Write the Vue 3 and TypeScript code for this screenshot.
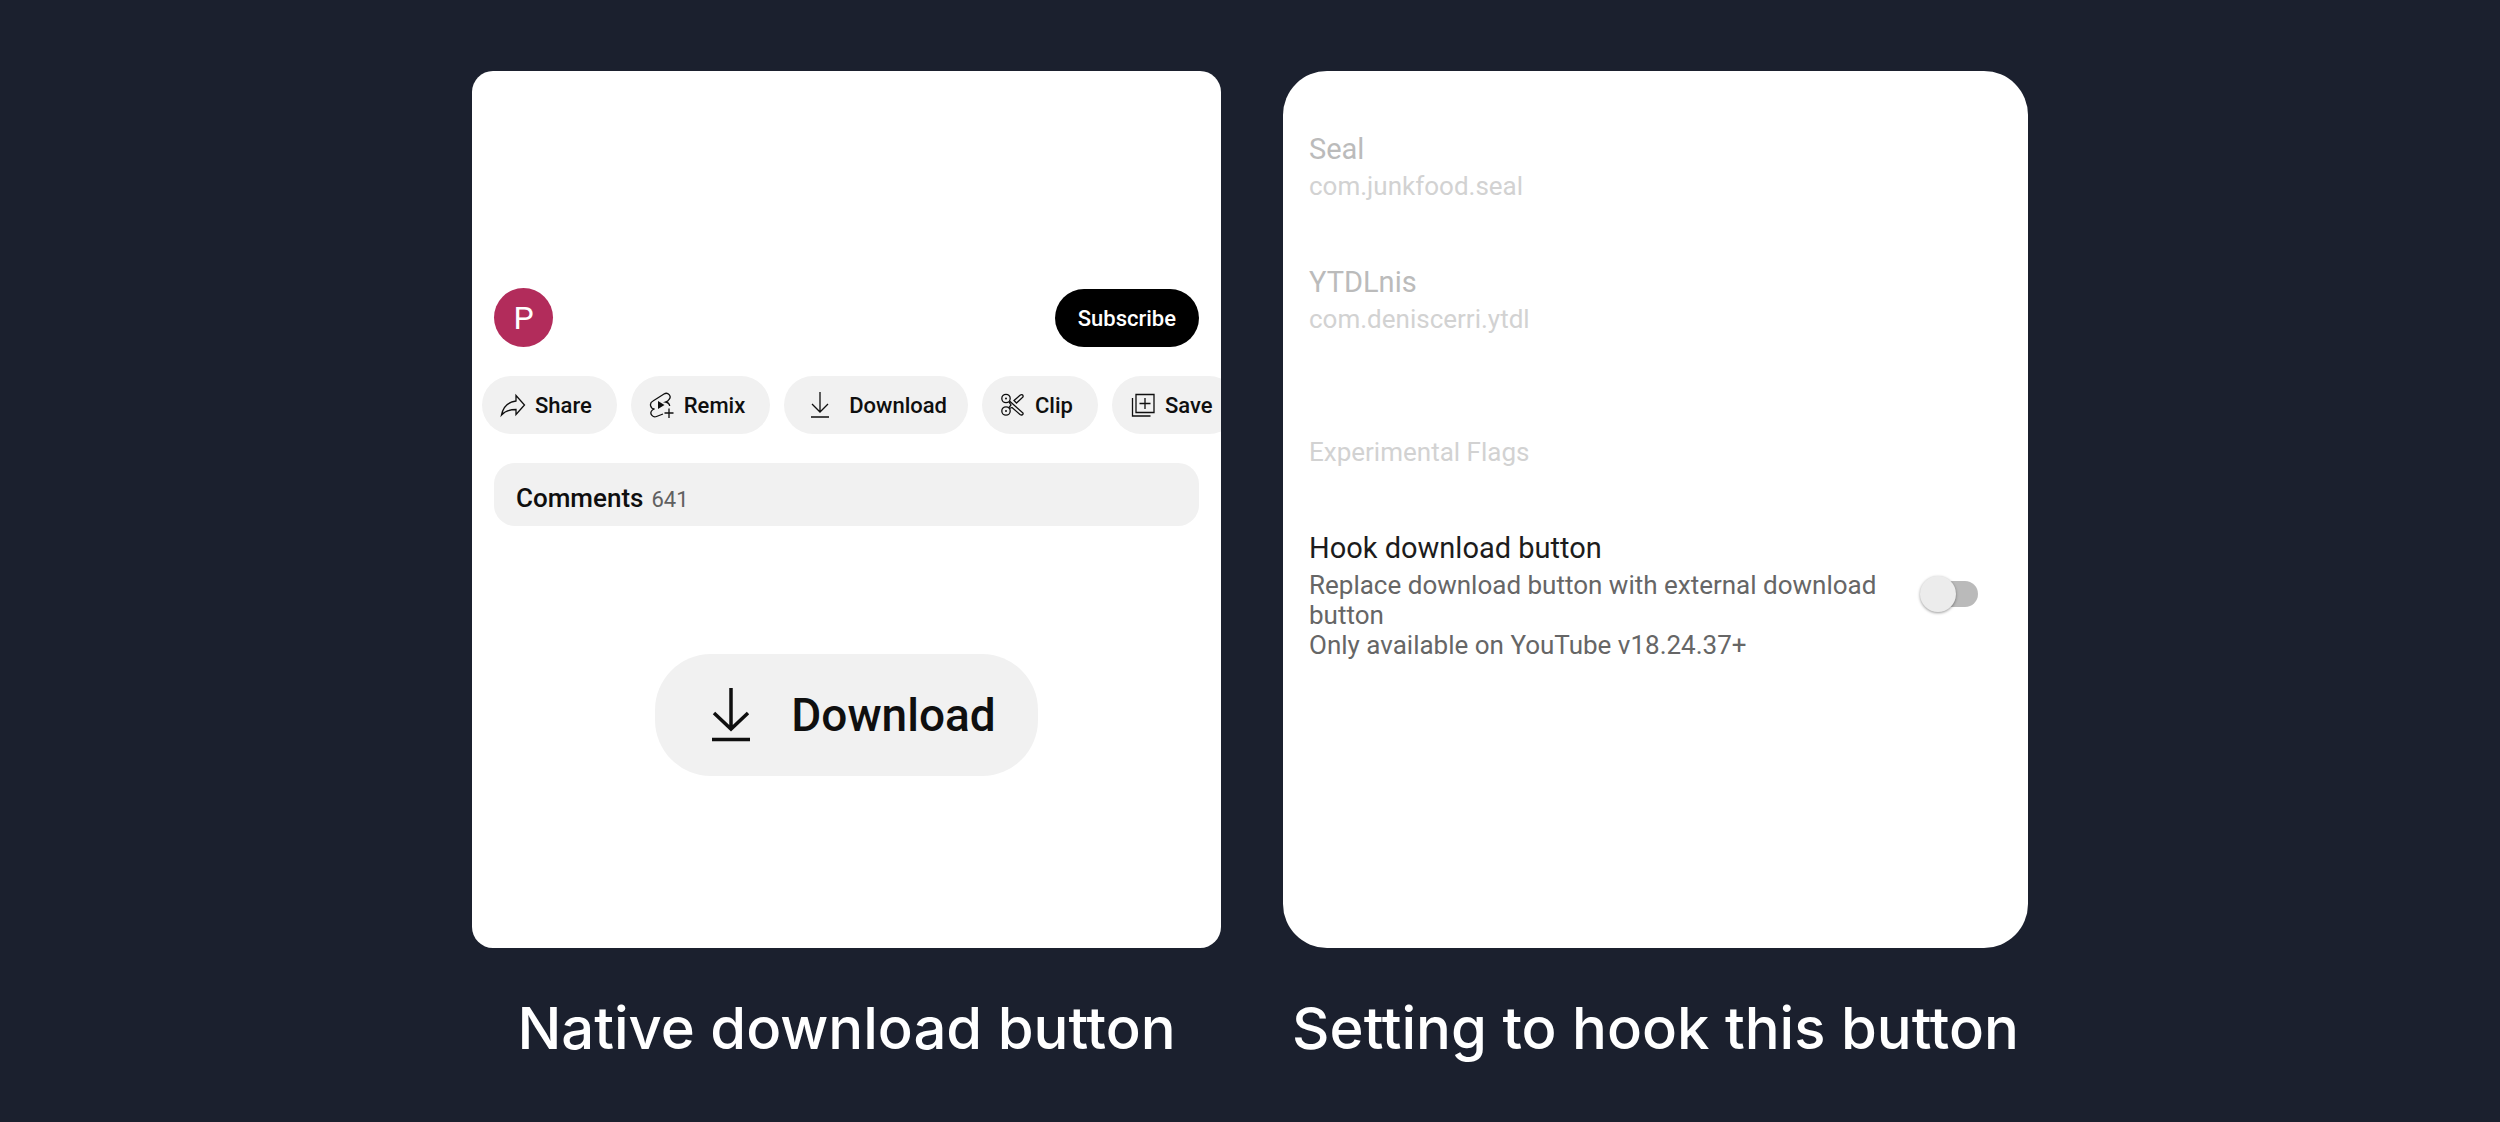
<script setup lang="ts">
import { ref } from 'vue'

interface Chip {
  id: string
  label: string
}

interface AppEntry {
  name: string
  pkg: string
}

const chips: Chip[] = [
  { id: 'share', label: 'Share' },
  { id: 'remix', label: 'Remix' },
  { id: 'download', label: 'Download' },
  { id: 'clip', label: 'Clip' },
  { id: 'save', label: 'Save' },
]

const apps: AppEntry[] = [
  { name: 'Seal', pkg: 'com.junkfood.seal' },
  { name: 'YTDLnis', pkg: 'com.deniscerri.ytdl' },
]

const hooked = ref(false)
</script>

<template>
  <main class="page">
    <figure class="shot">
      <div class="panel video">
        <div class="channel">
          <span class="avatar">P</span>
          <button type="button" class="subscribe">Subscribe</button>
        </div>
        <div class="chips">
          <button v-for="chip in chips" :key="chip.id" type="button" class="chip" :class="chip.id">
            <svg v-if="chip.id === 'share'" class="icon" viewBox="0 0 26 26" aria-hidden="true">
              <path d="M16 3.500L24.500 13L16 22.500V17.500C9 17.500 4.500 19.500 1.500 23C3 15.500 7.500 10 16 9Z" />
            </svg>
            <svg v-else-if="chip.id === 'remix'" class="icon" viewBox="0 0 26 26" aria-hidden="true">
              <path d="M14 22L7.500 24.500C4 26 .5 22 2.500 19C3 18 4 17.500 5.500 17C1 16.500 0 11 4 9L15 2C19 -.5 23 4.500 20 7.500C19.500 8.500 18 9.500 16.500 10C19 10.500 20.500 12 20.700 14" />
              <path class="solid" d="M9 9L15.500 13L9 17Z" />
              <path d="M20 16.500V26M15.500 21H24.500" />
            </svg>
            <svg v-else-if="chip.id === 'download'" class="icon" viewBox="0 0 26 26" aria-hidden="true">
              <path d="M13 0V19M5 12L13 20L21 12M4 25H22" />
            </svg>
            <svg v-else-if="chip.id === 'clip'" class="icon" viewBox="0 0 26 26" aria-hidden="true">
              <circle cx="6" cy="6.500" r="4.200" />
              <circle cx="6" cy="19" r="4.200" />
              <circle class="solid" cx="6" cy="6.500" r="1" />
              <circle class="solid" cx="6" cy="19" r="1" />
              <path d="M9.500 9L23 21C23.500 23 21.500 23.500 20 22.500L12 15.500L9.500 16.500M9 10L11 13L9 15.500M14 8.500L20 3.300C22 2 23.500 3 23 5L16.500 11Z" />
            </svg>
            <svg v-else class="icon" viewBox="0 0 26 26" aria-hidden="true">
              <path d="M6 2.500H24V20.500H6ZM15 6V17M9.500 11.500H20.500M2.500 6V24H20.500" />
            </svg>
            <span>{{ chip.label }}</span>
          </button>
        </div>
        <section class="comments">
          <h2>Comments</h2>
          <span>641</span>
        </section>
        <button type="button" class="download-large">
          <svg viewBox="0 0 40 54" aria-hidden="true">
            <path d="M20 0V42M3 25L20 41L37 25M1 51.500H39" />
          </svg>
          <span>Download</span>
        </button>
      </div>
      <figcaption>Native download button</figcaption>
    </figure>

    <figure class="shot">
      <div class="panel settings">
        <div v-for="app in apps" :key="app.pkg" class="entry faded">
          <h3>{{ app.name }}</h3>
          <p>{{ app.pkg }}</p>
        </div>
        <p class="group">Experimental Flags</p>
        <div class="hook">
          <label class="entry" for="hook-download">
            <span class="title">Hook download button</span>
            <span class="summary">Replace download button with external download button<br />Only available on YouTube v18.24.37+</span>
          </label>
          <input id="hook-download" v-model="hooked" type="checkbox" role="switch" class="switch" />
        </div>
      </div>
      <figcaption>Setting to hook this button</figcaption>
    </figure>
  </main>
</template>

<style>
body {
  margin: 0;
  background: #1b202e;
}
</style>

<style scoped>
* {
  box-sizing: border-box;
}

.page {
  display: grid;
  grid-template-columns: 749fr 745fr;
  gap: 62px;
  max-width: 1556px;
  min-height: 100vh;
  margin: 0 auto;
  padding-top: 71px;
  font-family: Roboto, sans-serif;
}

.shot {
  display: flex;
  flex-direction: column;
  min-width: 0;
  margin: 0;
}

.panel {
  display: flex;
  flex-direction: column;
  min-height: 877px;
  overflow: hidden;
  background: #fff;
}

figcaption {
  margin-top: 44px;
  color: #fff;
  font: 500 58px/72px Inter, sans-serif;
  text-align: center;
  white-space: nowrap;
}

button {
  border: 0;
  color: #0f0f0f;
  font-family: inherit;
  font-weight: 500;
}

svg {
  flex: none;
  fill: none;
  stroke: #0f0f0f;
}

.solid {
  fill: #0f0f0f;
  stroke: none;
}

.video {
  padding-top: 217px;
  border-radius: 21px;
}

.channel {
  display: flex;
  align-items: flex-end;
  justify-content: space-between;
  padding: 0 22px;
}

.avatar {
  width: 59px;
  height: 59px;
  border-radius: 50%;
  background: #b22c5b;
  color: #fff;
  font-size: 32px;
  line-height: 60px;
  text-align: center;
}

.subscribe {
  height: 58px;
  padding: 0 23px;
  border-radius: 29px;
  background: #000;
  color: #fff;
  font-size: 22px;
}

.chips {
  display: flex;
  gap: 14px;
  margin-top: 29px;
  padding-left: 10px;
}

.chip {
  display: flex;
  flex: none;
  align-items: center;
  gap: 9px;
  height: 58px;
  padding: 0 25px 0 18px;
  border-radius: 29px;
  background: #f1f1f1;
  font-size: 22px;
}

.chip.download {
  gap: 16px;
  padding: 0 21px 0 23px;
}

.icon {
  width: 26px;
  height: 26px;
  stroke-width: 1.3;
}

.comments {
  display: flex;
  align-items: baseline;
  gap: 8px;
  height: 63px;
  margin: 29px 22px 0;
  padding: 20px 22px 0;
  border-radius: 21px;
  background: #f1f1f1;
  color: #606060;
  font-size: 22px;
  line-height: 30px;
}

.comments h2 {
  margin: 0;
  color: #0f0f0f;
  font-size: 26px;
  font-weight: 500;
}

.download-large {
  display: flex;
  align-items: center;
  align-self: center;
  gap: 40px;
  height: 122px;
  margin-top: 128px;
  padding: 0 42px 0 56px;
  border-radius: 56px;
  background: #f1f1f1;
  font-size: 46px;
}

.download-large svg {
  width: 40px;
  height: 54px;
  stroke-width: 3.5;
}

.settings {
  padding: 58px 50px 0 26px;
  border-radius: 44px;
}

.entry {
  display: flex;
  flex-direction: column;
  gap: 2px;
  color: #666;
  font-size: 26px;
  line-height: 30px;
}

.entry h3,
.title {
  margin: 0;
  color: #1c1c1c;
  font-size: 29px;
  font-weight: 400;
  line-height: 40px;
}

.entry p {
  margin: 0;
}

.faded {
  margin-bottom: 61px;
  color: #d2d2d2;
}

.faded h3 {
  color: #bbb;
}

.group {
  margin: 42px 0 0;
  color: #d2d2d2;
  font-size: 26px;
  line-height: 30px;
}

.hook {
  display: flex;
  align-items: center;
  justify-content: space-between;
  gap: 20px;
  margin-top: 61px;
}

.hook .entry {
  flex: 0 1 570px;
}

.switch {
  flex: none;
  display: grid;
  align-items: center;
  width: 58px;
  height: 36px;
  margin: 0;
  appearance: none;
}

.switch::before,
.switch::after {
  content: '';
  grid-area: 1 / 1;
}

.switch::before {
  justify-self: end;
  width: 48px;
  height: 26px;
  border-radius: 13px;
  background: #bababa;
}

.switch::after {
  width: 36px;
  height: 36px;
  border-radius: 50%;
  background: #ececec;
  box-shadow: 0 1px 3px #0006;
}

.switch:checked::after {
  justify-self: end;
}
</style>
